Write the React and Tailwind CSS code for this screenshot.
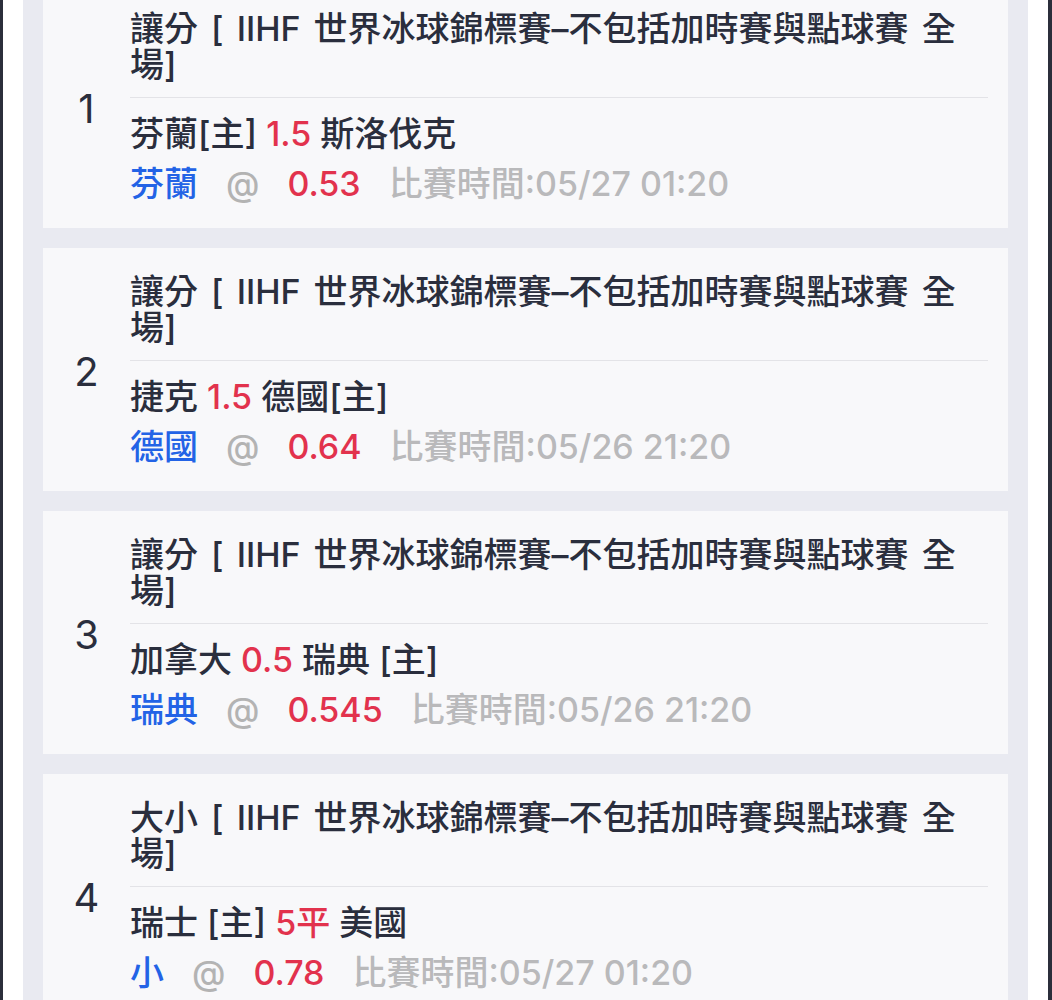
import React from "react";

const bets = [
  {
    no: 1,
    type: "讓分",
    teams: [
      { text: "芬蘭[主] " },
      { text: "1.5", red: true },
      { text: " 斯洛伐克" },
    ],
    pick: "芬蘭",
    odds: "0.53",
    time: "05/27 01:20",
  },
  {
    no: 2,
    type: "讓分",
    teams: [
      { text: "捷克 " },
      { text: "1.5", red: true },
      { text: " 德國[主]" },
    ],
    pick: "德國",
    odds: "0.64",
    time: "05/26 21:20",
  },
  {
    no: 3,
    type: "讓分",
    teams: [
      { text: "加拿大 " },
      { text: "0.5", red: true },
      { text: " 瑞典 [主]" },
    ],
    pick: "瑞典",
    odds: "0.545",
    time: "05/26 21:20",
  },
  {
    no: 4,
    type: "大小",
    teams: [
      { text: "瑞士 [主] " },
      { text: "5平", red: true },
      { text: " 美國" },
    ],
    pick: "小",
    odds: "0.78",
    time: "05/27 01:20",
  },
];

const font = {
  fontFamily: 'Inter, "Noto Sans CJK TC", sans-serif',
};

const BetCard = ({ bet, first }) => (
  <div
    className={`flex items-center bg-[#f8f8fa] ${first ? "-mt-[15px]" : ""}`}
  >
    <div className="w-[87px] shrink-0 pt-[4px] text-center text-[40px] leading-none text-[#2a2e3d]">
      {bet.no}
    </div>
    <div className="flex-1 pt-[26px] pb-[26px] pr-[20px]">
      <p className="max-w-[840px] text-[34px] leading-[36px] font-medium text-[#2a2e3d] [word-spacing:4px]">
        {bet.type} [ IIHF 世界冰球錦標賽–不包括加時賽與點球賽 全場]
      </p>
      <div className="mt-[14px] h-px bg-[#e3e3e7]" />
      <p className="mt-[18px] text-[34px] leading-[36px] font-medium text-[#2a2e3d] whitespace-pre">
        {bet.teams.map((t, i) => (
          <span key={i} className={t.red ? "text-[#e2324d]" : ""}>
            {t.text}
          </span>
        ))}
      </p>
      <div className="mt-[14px] flex items-center gap-[28px] text-[34px] leading-[36px] font-medium">
        <span className="text-[#2363e6]">{bet.pick}</span>
        <span className="text-[#b3b3b3]">@</span>
        <span className="text-[#e2324d]">{bet.odds}</span>
        <span className="text-[#b9b9bb]">比賽時間:{bet.time}</span>
      </div>
    </div>
  </div>
);

export default function App() {
  return (
    <div
      className="h-[1000px] overflow-hidden bg-[#2b2e3b] pl-[3px] pr-[4px]"
      style={font}
    >
      <div className="h-full bg-white px-[20px]">
        <div className="h-full bg-[#e9eaf1] px-[20px] flex flex-col gap-[20px]">
          {bets.map((b, i) => (
            <BetCard key={b.no} bet={b} first={i === 0} />
          ))}
        </div>
      </div>
    </div>
  );
}
